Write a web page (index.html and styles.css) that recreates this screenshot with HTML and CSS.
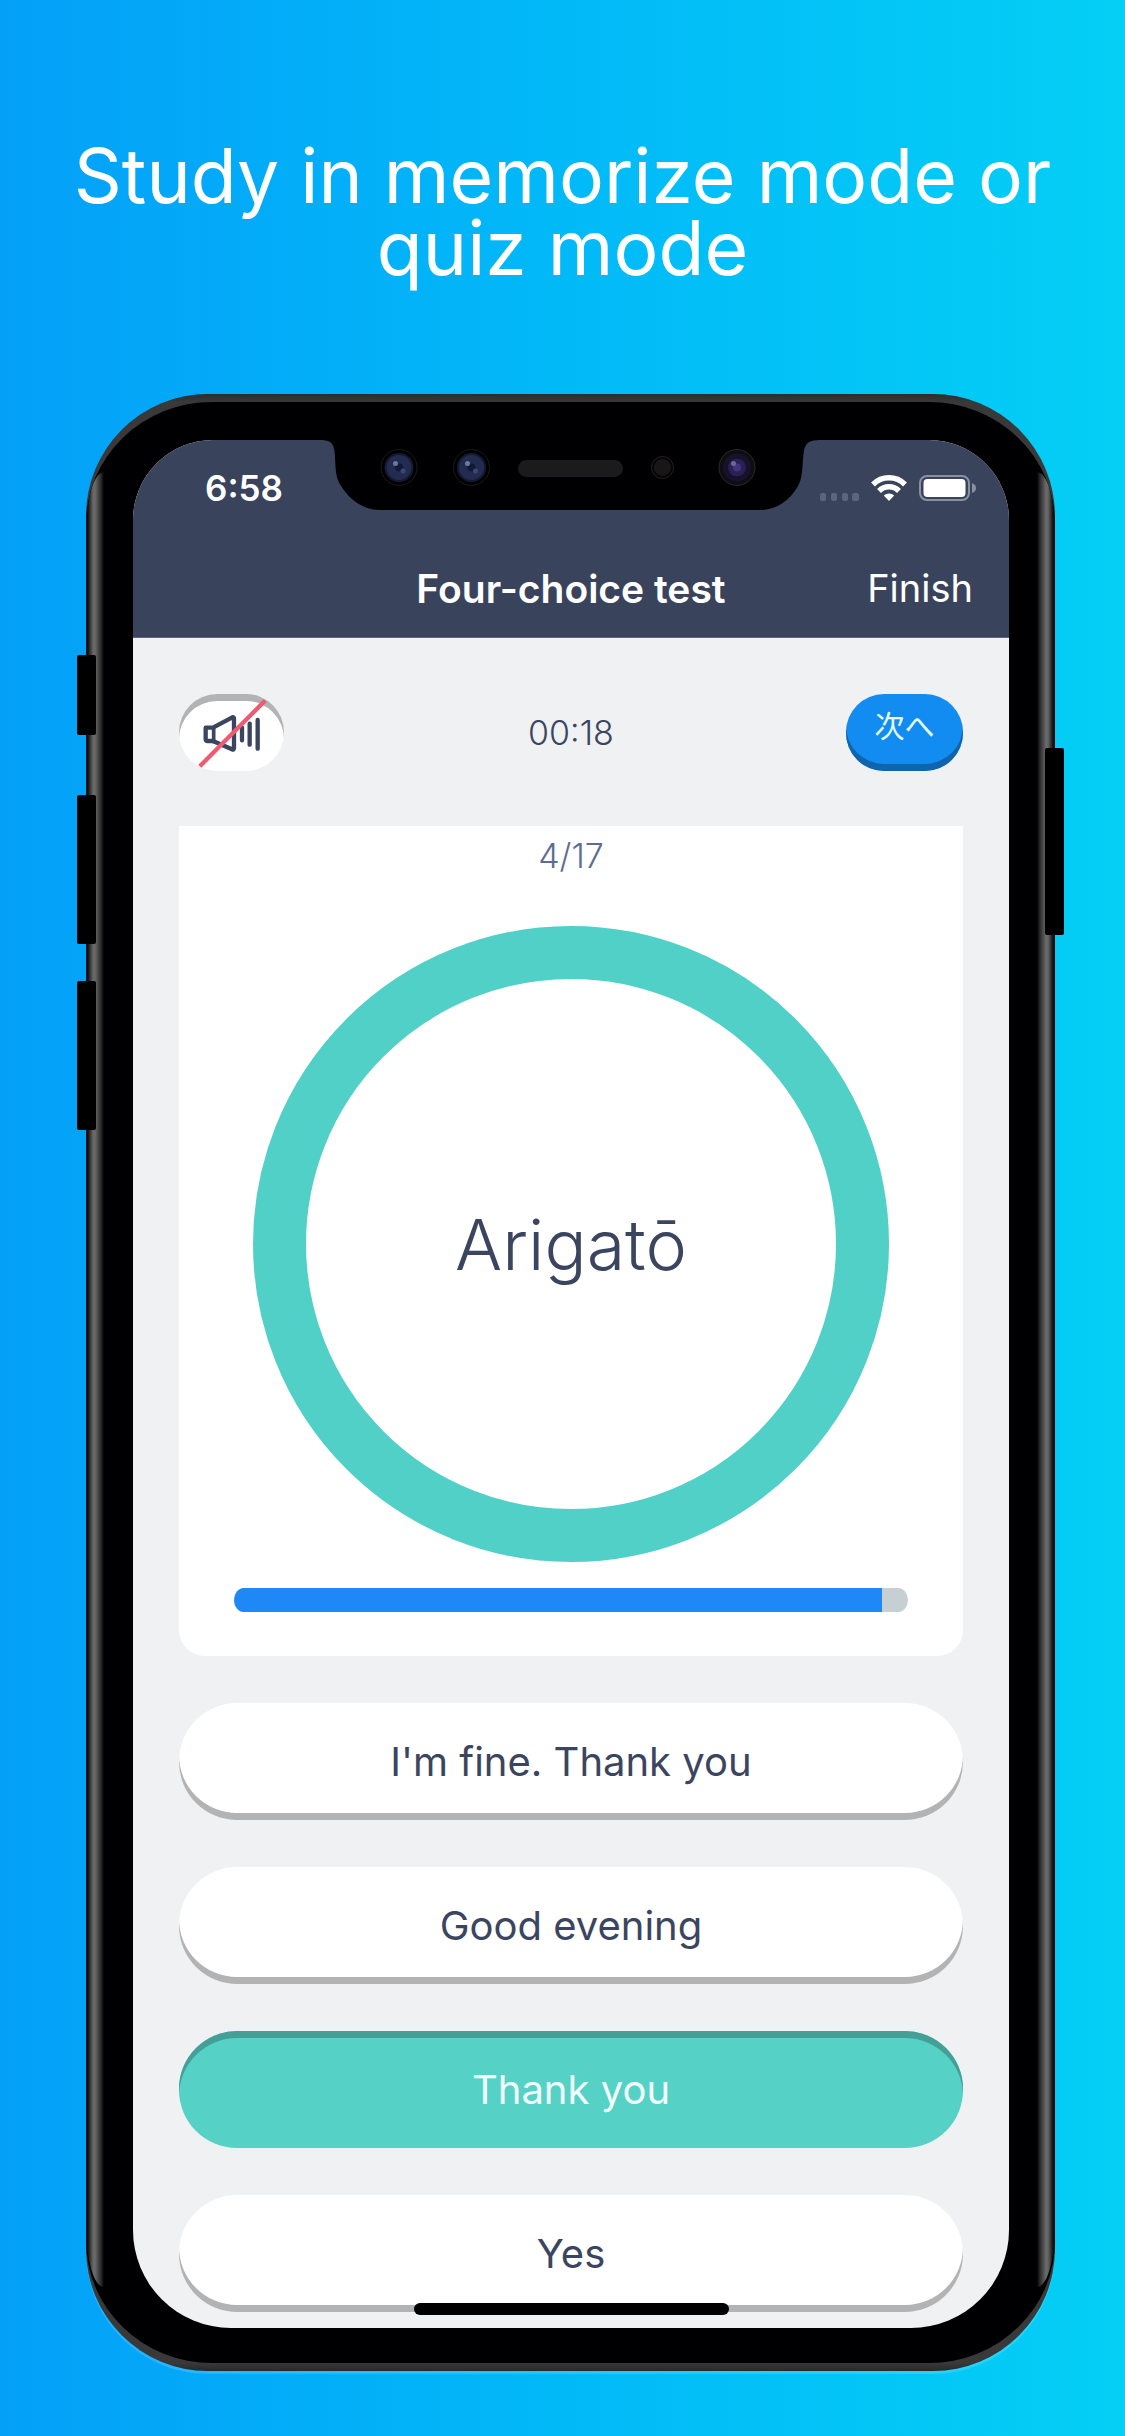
FILE: index.html
```html
<!DOCTYPE html>
<html lang="en">
<head>
<meta charset="utf-8">
<meta name="viewport" content="width=device-width, initial-scale=1">
<title>Four-choice test</title>
<link rel="stylesheet" href="styles.css">
</head>
<body>
<h1 class="headline">Study in memorize mode or quiz mode</h1>
<div class="phone">
  <span class="rail rail-left"></span>
  <span class="rail rail-right"></span>
  <span class="key key-silent"></span>
  <span class="key key-up"></span>
  <span class="key key-down"></span>
  <span class="key key-power"></span>
  <main class="screen">
    <header class="topbar">
      <div class="status">
        <span class="clock">6:58</span>
        <svg class="status-icons" width="156" height="28" viewBox="820 473 156 28" aria-hidden="true">
          <g fill="#5c657d">
            <rect x="820" y="492" width="6" height="8" rx="2"/><rect x="831" y="492" width="6" height="8" rx="2"/>
            <rect x="842" y="492" width="6" height="8" rx="2"/><rect x="852" y="492" width="7" height="8" rx="2"/>
          </g>
          <g fill="none" stroke="#fff" stroke-width="5.4">
            <path d="M873 483.5a22.5 22.5 0 0 1 32 0"/>
            <path d="M879 490a14 14 0 0 1 20 0"/>
          </g>
          <path d="M889 500l-5.200-5.500a7.500 7.500 0 0 1 10.400 0z" fill="#fff"/>
          <rect x="920" y="475" width="49" height="24" rx="7" fill="none" stroke="#8a90a3" stroke-width="2"/>
          <rect x="923.500" y="478" width="42" height="18" rx="4" fill="#fff"/>
          <path d="M972 482q4 1.500 4 5t-4 5z" fill="#8a90a3"/>
        </svg>
      </div>
      <nav class="nav">
        <h2 class="title">Four-choice test</h2>
        <a class="finish" href="#finish">Finish</a>
      </nav>
    </header>
    <section class="controls">
      <button class="sound" type="button" aria-label="Sound off">
        <svg width="70" height="72" viewBox="200 170 210 216" fill="none" stroke="#3b4560" stroke-linecap="round" stroke-linejoin="round">
          <path d="M226 262h22l58-31q5-2 5 4v88q0 6-6 4l-57-25h-16q-6 0-6-6z" stroke-width="13"/>
          <path d="M250 262v42" stroke-width="11"/>
          <path d="M335 262v38M358 250v63M382 239v86" stroke-width="13"/>
          <path d="M213 373L400 185" stroke="#ee5a72" stroke-width="13" stroke-linecap="square"/>
        </svg>
      </button>
      <time class="timer">00:18</time>
      <button class="next" type="button" lang="ja">次へ</button>
    </section>
    <section class="card">
      <p class="count">4/17</p>
      <div class="ring"><span>Arigatō</span></div>
      <progress class="remaining" max="1000" value="962" aria-label="Time remaining"></progress>
    </section>
    <section class="answers">
      <button class="answer" type="button">I'm fine. Thank you</button>
      <button class="answer" type="button">Good evening</button>
      <button class="answer correct" type="button">Thank you</button>
      <button class="answer" type="button">Yes</button>
    </section>
    <span class="home"></span>
  </main>
  <svg class="notch" width="506" height="71" viewBox="316 439 506 71" aria-hidden="true">
    <path d="M316 439v1C329 440 333 441 334.500 451C336 463 334 476 341 486C350 500 363 510 380 510H760C776 510 789 501 797.500 487C803 478 802 467 803.500 454C805 443 808 440 821 440v-1z" fill="#000003"/>
    <g fill="none" stroke="#1d1916"><circle cx="399" cy="467.500" r="18"/><circle cx="471.500" cy="467.500" r="18"/></g>
    <g fill="#232c50" stroke="#141a33" stroke-width="2"><circle cx="399" cy="467.500" r="13.500"/><circle cx="471.500" cy="467.500" r="13.500"/></g>
    <g fill="#101a38"><circle cx="399" cy="467.500" r="4"/><circle cx="471.500" cy="467.500" r="4"/></g>
    <g fill="#6d7a96"><circle cx="395.500" cy="463.500" r="2.500"/><circle cx="467.500" cy="463.500" r="2.500"/></g>
    <g fill="#3b4872"><circle cx="403" cy="471" r="2.500"/><circle cx="475.500" cy="471" r="2.500"/></g>
    <rect x="518" y="460" width="105" height="17" rx="8.500" fill="#1b1b1b"/>
    <circle cx="662.500" cy="467.500" r="11" fill="#050505" stroke="#28211d"/>
    <circle cx="662.500" cy="467.500" r="8.500" fill="#171717"/>
    <circle cx="737" cy="467.500" r="18" fill="#0e0e10" stroke="#2c2727"/>
    <circle cx="737" cy="467.500" r="14" fill="#17122b"/>
    <circle cx="737" cy="467.500" r="9" fill="#2a2054"/>
    <circle cx="737" cy="467.500" r="4" fill="#43347d"/>
    <circle cx="733.500" cy="463.500" r="2.500" fill="#6f6796"/>
  </svg>
</div>
</body>
</html>
```
FILE: styles.css
```css
* { box-sizing: border-box; }

body {
  margin: 0;
  padding: 140px 70px 65px 86px;
  background: linear-gradient(90deg, #04a0f8, #02b9f8 50%, #04cff5);
  font-family: Inter, "Noto Sans CJK JP", sans-serif;
  color: #3b4560;
}

button { font: inherit; color: inherit; border: 0; padding: 0; cursor: pointer; }

.headline {
  margin: 0 -24px 110px -40px;
  font-size: 75px;
  line-height: 72px;
  font-weight: 400;
  text-align: center;
  color: #fff;
}

/* Device shell: metal edge, black bezel, side rails and keys */
.phone {
  position: relative;
  padding: 46px 46px 43px 47px;
  border-radius: 122px;
  background: linear-gradient(#2c2c2d, #39393a 8px, #39393a calc(100% - 8px), #29292a);
  box-shadow: 0 3px 0 rgba(255, 255, 255, .15);
}

.phone::before {
  content: "";
  position: absolute;
  inset: 8px 0;
  border-radius: 126px / 122px;
  background: #000003;
}

.rail {
  position: absolute;
  top: 78px;
  bottom: 84px;
  width: 18px;
}

.rail-left {
  left: 0;
  border-radius: 18px 0 0 18px / 60px 0 0 60px;
  background: linear-gradient(90deg, #111 2px, #666 7px, #6a6a6a 9px, #2a2a2a 15px, #000003);
}

.rail-right {
  right: 0;
  border-radius: 0 18px 18px 0 / 0 60px 60px 0;
  background: linear-gradient(270deg, #111 2px, #666 7px, #6a6a6a 9px, #2a2a2a 15px, #000003);
}

.key {
  position: absolute;
  left: -9px;
  width: 19px;
  height: 149px;
  border-radius: 2px;
  background: #000;
}

.key-silent { top: 261px; height: 80px; }
.key-up { top: 401px; }
.key-down { top: 587px; }
.key-power { top: 354px; left: auto; right: -9px; height: 187px; }

.screen {
  position: relative;
  overflow: hidden;
  border-radius: 80px 80px 98px 98px;
  background: #eff1f3;
}

.notch {
  position: absolute;
  top: 45px;
  left: 50%;
  margin-left: -255px;
}

.topbar { background: #39435c; color: #fff; border-bottom: 1px solid #5d6577; }

.status {
  display: flex;
  justify-content: space-between;
  align-items: center;
  height: 99px;
  padding: 0 33px 4px 72px;
}

.clock { font-size: 35px; font-weight: 600; }

.nav {
  display: grid;
  grid-template-columns: 1fr auto 1fr;
  align-items: center;
  height: 98px;
  padding: 0 36px;
}

.title { grid-column: 2; margin: 0; font-size: 39px; font-weight: 600; }
.finish { justify-self: end; font-size: 38px; color: inherit; text-decoration: none; }

.controls {
  display: grid;
  grid-template-columns: 1fr auto 1fr;
  align-items: center;
  padding: 56px 46px 55px;
}

.sound, .next { height: 77px; border-radius: 38px; }

.sound {
  display: grid;
  place-items: center;
  width: 105px;
  background: #fff;
  box-shadow: inset 0 7px #b3b3b3;
}

.timer { font-size: 34px; font-weight: 300; }

.next {
  justify-self: end;
  width: 117px;
  padding-bottom: 17px;
  background: #138cf2;
  box-shadow: inset 0 -7px #1064ad;
  color: #e6fbff;
  font-family: "Noto Sans CJK JP", sans-serif;
  font-size: 30px;
  font-weight: 400;
}

.card {
  display: flex;
  flex-direction: column;
  align-items: center;
  margin: 0 46px;
  padding: 0 55px 44px;
  border-radius: 0 0 26px 26px;
  background: #fff;
}

.count { margin: 0 0 40px; font-size: 34px; line-height: 60px; font-weight: 300; color: #5d6c90; }

.ring {
  display: grid;
  place-items: center;
  width: 636px;
  max-width: 100%;
  aspect-ratio: 1;
  margin-bottom: 26px;
  border: 53px solid #51d0c7;
  border-radius: 50%;
  font-size: 70px;
  font-weight: 300;
}

.remaining {
  appearance: none;
  display: block;
  width: 100%;
  height: 24px;
  border: 0;
  border-radius: 10px / 12px;
  overflow: hidden;
  background: #c6cfd2;
}

.remaining::-webkit-progress-bar { background: #c6cfd2; }
.remaining::-webkit-progress-value { background: #1e88f7; }

.answers {
  display: flex;
  flex-direction: column;
  gap: 47px;
  padding: 47px 46px 16px;
}

.answer {
  height: 117px;
  border-radius: 58px;
  background: #fff;
  box-shadow: inset 0 -7px #b3b3b3;
  font-size: 40px;
}

.correct {
  background: #55d1c6;
  box-shadow: inset 0 7px #449f97;
  color: #f2ffff;
}

.home {
  position: absolute;
  bottom: 13px;
  left: 50%;
  width: 315px;
  height: 12px;
  margin-left: -157px;
  border-radius: 6px;
  background: #000;
}
```
